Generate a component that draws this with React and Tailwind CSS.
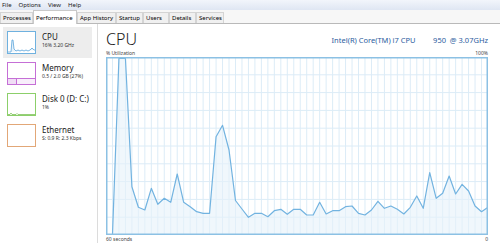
import React from "react";

const W = 382;
const H = 178;
const ys = [
  235, 235, 58.3, 58.3, 186.7, 207.3, 210, 188.3, 204.3, 198.3, 202.3, 174, 202.3, 206.7, 211.7,
  213.3, 213.3, 136.7, 125.3, 150, 200.5, 209, 217.3, 213.3, 213.3, 216.7, 210.7, 209.3, 214.3,
  209.3, 209.3, 215, 215, 202.3, 214, 210.7, 210.7, 206.7, 206, 213.3, 215, 210, 201.3, 208.3,
  206, 209.3, 214, 207.3, 196, 208.3, 172.7, 198.3, 193.3, 176, 194, 184.3, 191, 206, 211.7, 207.3,
];

function Chart() {
  const step = W / 59;
  const pts = ys.map((y, i) => [i * step, y - 57]);
  const line = pts.map((p) => p.join(",")).join(" ");
  const fill = `0,${H} ${line} ${W},${H}`;
  const vlines = [];
  for (let i = 1; i < 59; i++) vlines.push(i * step);
  const hlines = [];
  for (let i = 1; i < 10; i++) hlines.push((i * H) / 10);
  return (
    <svg width={W} height={H} viewBox={`0 0 ${W} ${H}`} className="block">
      <rect x="0" y="0" width={W} height={H} fill="#ffffff" />
      {vlines.map((x, i) => (
        <line key={"v" + i} x1={x} y1="0" x2={x} y2={H} stroke="#dcecf7" strokeWidth="1" />
      ))}
      {hlines.map((y, i) => (
        <line key={"h" + i} x1="0" y1={y} x2={W} y2={y} stroke="#dcecf7" strokeWidth="1" />
      ))}
      <polygon points={fill} fill="#e6f1fa" fillOpacity="0.6" />
      <polyline points={line} fill="none" stroke="#72b3e0" strokeWidth="1.2" strokeLinejoin="round" />
      <rect x="0.75" y="0.75" width={W - 1.5} height={H - 1.5} fill="none" stroke="#8cc1e4" strokeWidth="1.5" />
    </svg>
  );
}

function Thumb({ color, children }) {
  return (
    <div className="w-[29px] h-[23px] border bg-white shrink-0 relative overflow-hidden" style={{ borderColor: color }}>
      {children}
    </div>
  );
}

function SideItem({ selected, color, title, sub, children }) {
  return (
    <div className={"h-[31px] flex items-start gap-[6px] pl-[4px] pt-[4px] " + (selected ? "bg-[#ededed]" : "")}>
      <Thumb color={color}>{children}</Thumb>
      <div className="flex flex-col pt-[1px]">
        <div className="text-[8px] leading-[10px] text-[#1a1a1a]">{title}</div>
        <div className="text-[5px] leading-[7px] text-[#333]">{sub}</div>
      </div>
    </div>
  );
}

const tabs = [
  ["Processes", "w-[33px]"],
  ["Performance", "w-[44px]"],
  ["App History", "w-[39px]"],
  ["Startup", "w-[27px]"],
  ["Users", "w-[26px]"],
  ["Details", "w-[27px]"],
  ["Services", "w-[28px]"],
];

export default function App() {
  return (
    <div
      className="w-[500px] h-[243px] overflow-hidden bg-white flex flex-col"
      style={{ fontFamily: '"Noto Sans", "Open Sans", sans-serif' }}
    >
      <div className="h-[10px] bg-gradient-to-b from-[#f2f5fb] to-[#dfe6f3] flex items-center gap-[7px] pl-[2px] text-[6px] leading-[10px] text-[#1a1a1a]">
        <span>File</span>
        <span>Options</span>
        <span>View</span>
        <span>Help</span>
      </div>
      <div className="h-[14px] bg-[#f7f7f7] flex items-end border-b border-[#b9b9b9]">
        {tabs.map(([t, w]) => (
          <div
            key={t}
            className={
              w +
              " shrink-0 text-[6px] leading-[10px] pl-[2px] border border-b-0 overflow-hidden whitespace-nowrap " +
              (t === "Performance"
                ? "bg-white border-[#c9c9c9] h-[14px] pt-[2px] -mb-[1px]"
                : "bg-[#f0f0f0] border-[#d4d4d4] h-[11px]")
            }
          >
            {t}
          </div>
        ))}
      </div>
      <div className="flex flex-1 min-h-0">
        <div className="w-[98px] border-r border-[#dcdcdc] pl-[3px] pt-[3px] pr-[5px]">
          <SideItem selected color="#6fb1df" title="CPU" sub="16% 3.20 GHz">
            <svg width="27" height="21" viewBox="0 0 27 21" className="block">
              <polyline
                points="0,20 3,20 4,8 5,8 6,17 8,19 10,18 12,19 14,18 16,19 18,18 20,19 22,18 24,16 26,18 27,18"
                fill="#e6f1fa"
                stroke="#5aa5db"
                strokeWidth="0.8"
              />
            </svg>
          </SideItem>
          <SideItem color="#c56fd6" title="Memory" sub="0.5 / 2.0 GB (27%)">
            <div className="absolute left-0 right-0 bottom-0 h-[6px] border-t border-[#c56fd6] bg-[#f8eefb]">
              <div className="w-[9px] h-full border-r border-[#c56fd6] bg-[#f0ddf5]" />
            </div>
          </SideItem>
          <SideItem color="#8ccf6a" title="Disk 0 (D: C:)" sub="1%">
            <svg width="27" height="21" viewBox="0 0 27 21" className="block">
              <polyline points="0,20.5 2,20.5 3,19 4,20.5 8,20.5 9,19.5 10,20.5 27,20.5" fill="none" stroke="#7cc257" strokeWidth="0.8" />
            </svg>
          </SideItem>
          <SideItem color="#e2a777" title="Ethernet" sub="S: 0.9 R: 2.3 Kbps" />
        </div>
        <div className="flex-1 pl-[8px] pt-[7px]">
          <div className="w-[382px] flex flex-col">
            <div className="flex items-end justify-between h-[16px]">
              <span className="text-[16px] leading-[16px] font-light text-[#1a1a1a]">CPU</span>
              <span className="text-[7.5px] leading-[10px] mb-[2px] text-[#2b5c9e] whitespace-pre">
                {"Intel(R) Core(TM) i7 CPU         950  @ 3.07GHz"}
              </span>
            </div>
            <div className="h-[10px] flex items-end justify-between text-[5px] leading-[7px] text-[#444]">
              <span>% Utilization</span>
              <span>100%</span>
            </div>
            <Chart />
            <div className="flex justify-between text-[5px] leading-[7px] text-[#444] pt-[1px]">
              <span>60 seconds</span>
              <span>0</span>
            </div>
          </div>
        </div>
      </div>
    </div>
  );
}
